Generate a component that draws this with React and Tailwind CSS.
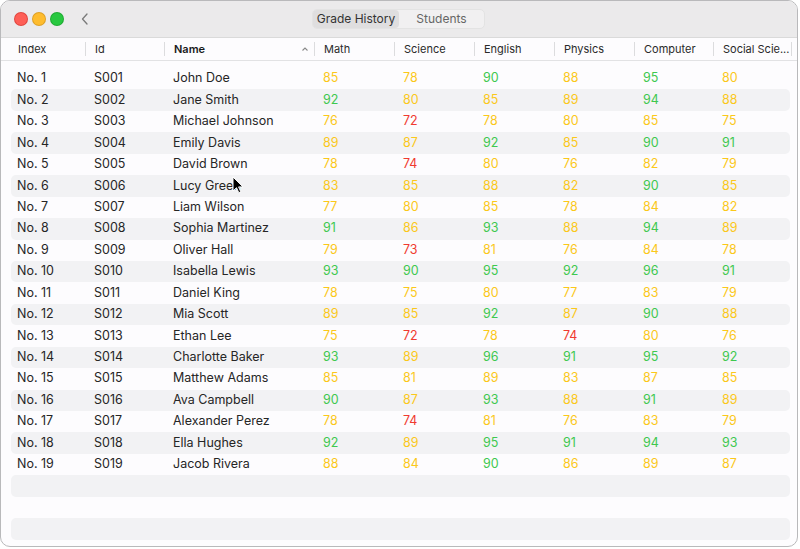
const students = [
  ['S001', 'John Doe', 85, 78, 90, 88, 95, 80],
  ['S002', 'Jane Smith', 92, 80, 85, 89, 94, 88],
  ['S003', 'Michael Johnson', 76, 72, 78, 80, 85, 75],
  ['S004', 'Emily Davis', 89, 87, 92, 85, 90, 91],
  ['S005', 'David Brown', 78, 74, 80, 76, 82, 79],
  ['S006', 'Lucy Green', 83, 85, 88, 82, 90, 85],
  ['S007', 'Liam Wilson', 77, 80, 85, 78, 84, 82],
  ['S008', 'Sophia Martinez', 91, 86, 93, 88, 94, 89],
  ['S009', 'Oliver Hall', 79, 73, 81, 76, 84, 78],
  ['S010', 'Isabella Lewis', 93, 90, 95, 92, 96, 91],
  ['S011', 'Daniel King', 78, 75, 80, 77, 83, 79],
  ['S012', 'Mia Scott', 89, 85, 92, 87, 90, 88],
  ['S013', 'Ethan Lee', 75, 72, 78, 74, 80, 76],
  ['S014', 'Charlotte Baker', 93, 89, 96, 91, 95, 92],
  ['S015', 'Matthew Adams', 85, 81, 89, 83, 87, 85],
  ['S016', 'Ava Campbell', 90, 87, 93, 88, 91, 89],
  ['S017', 'Alexander Perez', 78, 74, 81, 76, 83, 79],
  ['S018', 'Ella Hughes', 92, 89, 95, 91, 94, 93],
  ['S019', 'Jacob Rivera', 88, 84, 90, 86, 89, 87],
];

const columns = [
  { label: 'Index', w: 'w-[77px]' },
  { label: 'Id', w: 'w-[79px]' },
  { label: 'Name', w: 'w-[150px]', bold: true },
  { label: 'Math', w: 'w-[80px]' },
  { label: 'Science', w: 'w-[80px]' },
  { label: 'English', w: 'w-[80px]' },
  { label: 'Physics', w: 'w-[80px]' },
  { label: 'Computer', w: 'w-[79px]' },
  { label: 'Social Scie...', w: 'w-[78px]' },
];

function scoreColor(n) {
  if (n >= 90) return 'text-[#3ec84f]';
  if (n >= 75) return 'text-[#fbc81a]';
  return 'text-[#f03a30]';
}

function Header() {
  return (
    <div className="flex h-[23px] items-center border-b border-[#e2e2e4] pl-[17px] text-[11px] text-[#2a2a2a]">
      {columns.map((c) => (
        <div key={c.label} className={`${c.w} flex shrink-0 items-center`}>
          <span className={c.bold ? 'font-semibold text-[#1a1a1a]' : ''}>{c.label}</span>
          {c.bold && (
            <svg className="ml-auto mr-[5px] h-[8px] w-[8px] text-[#8a8a8a]" viewBox="0 0 8 8" fill="none" stroke="currentColor" strokeWidth="1.1">
              <path d="M1.5 5.5 4 3 6.5 5.5" />
            </svg>
          )}
          <div className={`${c.bold ? 'ml-0' : 'ml-auto'} mr-[9px] h-[14px] w-px bg-[#dcdcde]`} />
        </div>
      ))}
    </div>
  );
}

function Row({ data, i }) {
  const [id, name, ...scores] = data;
  return (
    <div className={`flex h-[21.45px] items-center rounded-[5px] pl-[6px] ${i % 2 === 1 ? 'bg-[#f2f2f4]' : ''}`}>
      <div className={`${columns[0].w} shrink-0`}>No. {i + 1}</div>
      <div className={`${columns[1].w} shrink-0`}>{id}</div>
      <div className={`${columns[2].w} shrink-0`}>{name}</div>
      {scores.map((s, k) => (
        <div key={k} className={`${columns[k + 3].w} shrink-0 ${scoreColor(s)}`}>{s}</div>
      ))}
    </div>
  );
}

export default function App() {
  return (
    <div className="h-[549px] w-[800px] bg-white" style={{ fontFamily: 'Inter, "Liberation Sans", sans-serif' }}>
      <div className="relative flex h-[547px] w-[798px] flex-col overflow-hidden rounded-[10px] border border-[#b9b9bb] bg-[#fdfcfe]">
        {/* title bar */}
        <div className="flex h-[37px] shrink-0 items-center border-b border-[#dadada] bg-[#ebeaeb] pl-[14px]">
          <div className="flex gap-[6px]">
            <div className="h-[12px] w-[12px] rounded-full bg-[#fe5f57] ring-1 ring-[#e1453e]" />
            <div className="h-[12px] w-[12px] rounded-full bg-[#febc2e] ring-1 ring-[#dea024]" />
            <div className="h-[12px] w-[12px] rounded-full bg-[#28c840] ring-1 ring-[#1eaa31]" />
          </div>
          <svg className="ml-[18px] h-[12px] w-[8px] text-[#7a7a7a]" viewBox="0 0 8 12" fill="none" stroke="currentColor" strokeWidth="1.3" strokeLinecap="round" strokeLinejoin="round">
            <path d="M6 1 1.5 6 6 11" />
          </svg>
          <div className="ml-[223px] flex h-[20px] w-[173px] rounded-[5px] border border-[#e3e3e3] bg-[#f1f0f1] text-[12px]">
            <div className="flex w-[86px] items-center justify-center rounded-[4px] bg-[#dfdedf] text-[#333]">Grade History</div>
            <div className="flex flex-1 items-center justify-center text-[#666]">Students</div>
          </div>
        </div>

        <Header />

        <div className="flex flex-col pl-[10px] pr-[7px] pt-[7px] text-[12.5px] text-[#262626]">
          {students.map((s, i) => (
            <Row key={s[0]} data={s} i={i} />
          ))}
          <div className="h-[21.45px] rounded-[5px] bg-[#f2f2f4]" />
          <div className="h-[21.45px]" />
          <div className="h-[21.45px] rounded-[5px] bg-[#f2f2f4]" />
        </div>

        {/* mouse pointer */}
        <svg className="absolute left-[231px] top-[175px] h-[18px] w-[12px]" viewBox="0 0 12 18">
          <path d="M1 1v14l3.5-3.3 2.3 5 2-0.9-2.2-4.9H11z" fill="#000" stroke="#fff" strokeWidth="1" strokeLinejoin="round" />
        </svg>
      </div>
    </div>
  );
}
